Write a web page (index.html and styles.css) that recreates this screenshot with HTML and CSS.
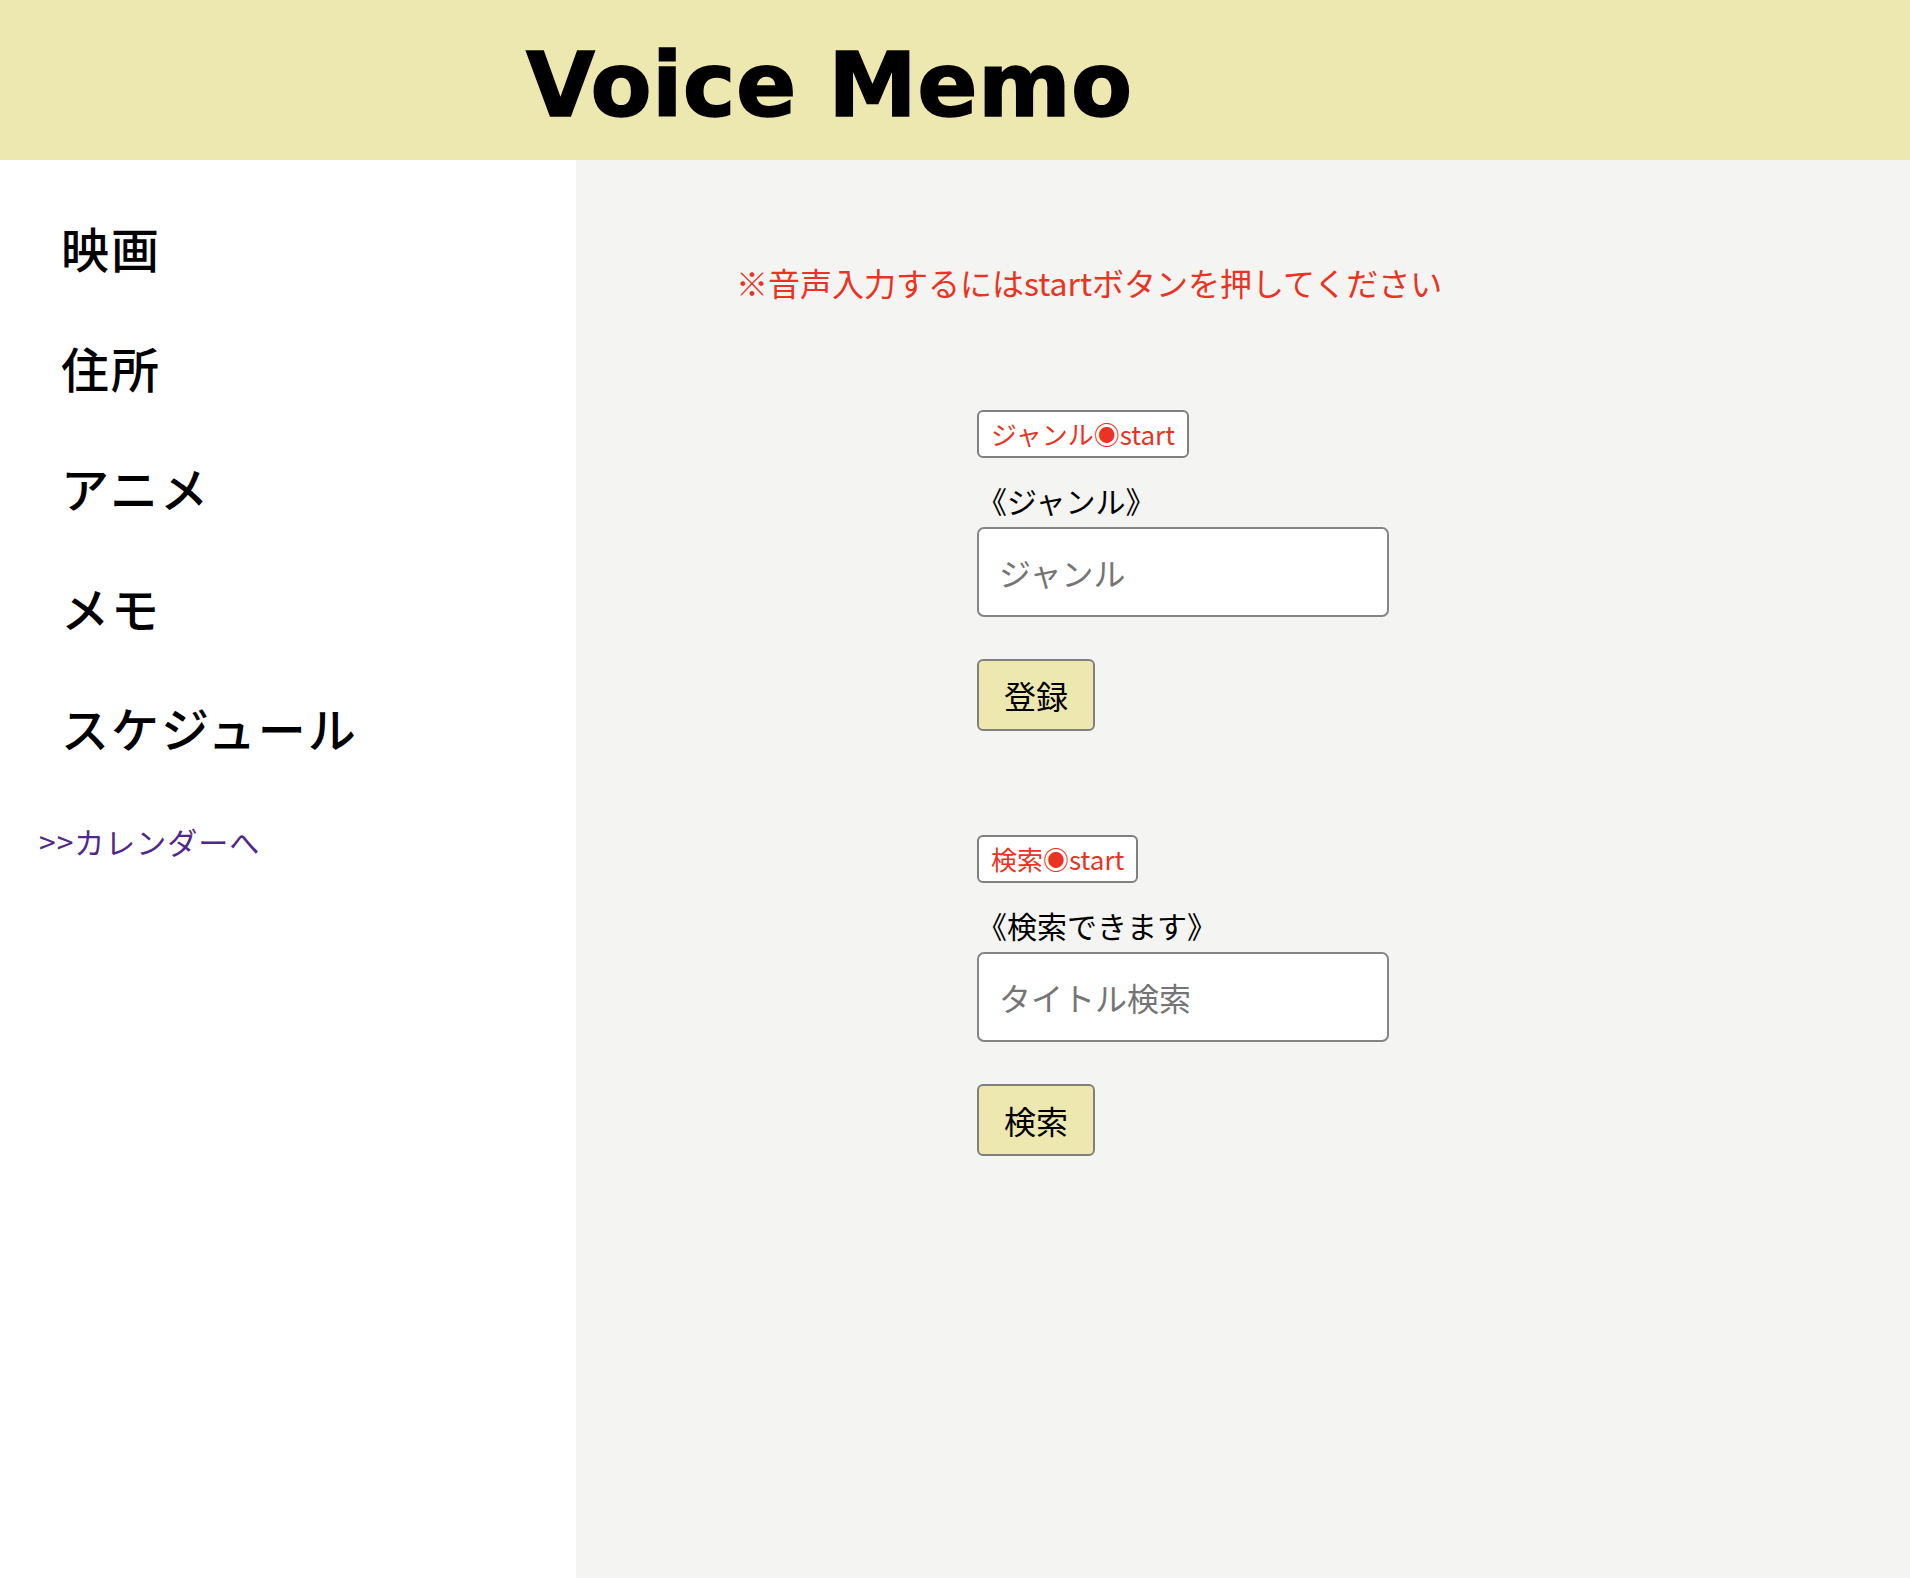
FILE: index.html
```html
<!DOCTYPE html>
<html lang="ja">
<head>
<meta charset="utf-8">
<title>Voice Memo</title>
<link rel="stylesheet" href="styles.css">
</head>
<body>
<header class="site-header">
  <h1 class="site-title">Voice Memo</h1>
</header>
<div class="layout">
  <nav class="sidebar">
    <ul class="menu">
      <li class="menu-item">映画</li>
      <li class="menu-item">住所</li>
      <li class="menu-item">アニメ</li>
      <li class="menu-item">メモ</li>
      <li class="menu-item">スケジュール</li>
    </ul>
    <a class="calendar-link" href="#">&gt;&gt;カレンダーへ</a>
  </nav>
  <main class="main">
    <p class="notice">※音声入力するにはstartボタンを押してください</p>
    <div class="forms">
      <section class="form-block">
        <button class="start-btn" type="button">ジャンル◉start</button>
        <label class="field-label" for="genre">《ジャンル》</label>
        <input class="field-input" id="genre" type="text" placeholder="ジャンル">
        <button class="action-btn" type="button">登録</button>
      </section>
      <section class="form-block second">
        <button class="start-btn" type="button">検索◉start</button>
        <label class="field-label" for="search">《検索できます》</label>
        <input class="field-input" id="search" type="text" placeholder="タイトル検索">
        <button class="action-btn" type="button">検索</button>
      </section>
    </div>
  </main>
</div>
</body>
</html>
```

FILE: styles.css
```css
html, body {
  margin: 0;
  padding: 0;
}

body {
  font-family: "Noto Sans CJK JP", "Noto Sans", sans-serif;
  color: #000;
  background: #fff;
}

.site-header {
  height: 160px;
  box-sizing: border-box;
  background: #ede7b0;
  padding: 41px 0 0 526px;
}

.site-title {
  margin: 0;
  font-family: "DejaVu Sans", "Liberation Sans", sans-serif;
  font-weight: bold;
  font-size: 89px;
  line-height: 89px;
  letter-spacing: 0.4px;
  color: #000;
  -webkit-text-stroke: 1.5px #000;
  white-space: nowrap;
}

.layout {
  display: flex;
  min-height: calc(100vh - 160px);
}

.sidebar {
  width: 576px;
  flex: 0 0 576px;
  background: #fff;
}

.menu {
  list-style: none;
  margin: 0;
  padding: 27px 0 0 61px;
}

.menu-item {
  font-size: 48px;
  line-height: 120px;
  letter-spacing: 2px;
  font-weight: 500;
  color: #000;
}

.calendar-link {
  display: block;
  margin: 32px 0 0 39px;
  font-size: 30px;
  letter-spacing: 1px;
  color: #50288a;
  text-decoration: none;
}

.main {
  flex: 1;
  background: #f4f4f2;
  padding: 99px 0 0 0;
}

.notice {
  margin: 0 0 0 160px;
  font-size: 32px;
  color: #ea3323;
}

.forms {
  margin: 105px 0 0 401px;
}

.form-block {
  display: flex;
  flex-direction: column;
  align-items: flex-start;
}

.form-block.second {
  margin-top: 104px;
}

.start-btn {
  height: 48px;
  box-sizing: border-box;
  padding: 0 12px;
  border: 2px solid #808080;
  border-radius: 6px;
  background: #fff;
  color: #ea3323;
  font-family: "Noto Sans CJK JP", sans-serif;
  font-size: 26px;
  line-height: 1;
  cursor: pointer;
}

.field-label {
  display: block;
  margin-top: 20px;
  font-size: 30px;
  color: #000;
}

.field-input {
  margin-top: 5px;
  width: 412px;
  height: 90px;
  box-sizing: border-box;
  padding: 0 20px;
  border: 2px solid #858585;
  border-radius: 7px;
  background: #fff;
  font-family: "Noto Sans CJK JP", sans-serif;
  font-size: 32px;
  color: #000;
  outline: none;
}

.field-input::placeholder {
  color: #757575;
}

.action-btn {
  margin-top: 42px;
  width: 118px;
  height: 72px;
  box-sizing: border-box;
  padding: 0;
  border: 2px solid #808080;
  border-radius: 6px;
  background: #ede7b0;
  color: #000;
  font-family: "Noto Sans CJK JP", sans-serif;
  font-size: 32px;
  line-height: 1;
  cursor: pointer;
}
```
